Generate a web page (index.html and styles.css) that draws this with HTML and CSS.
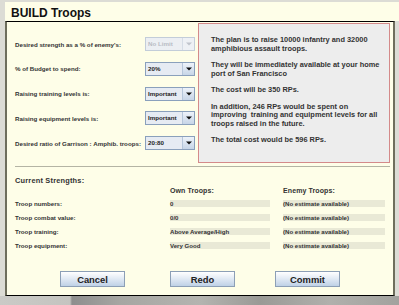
FILE: index.html
```html
<!DOCTYPE html>
<html>
<head>
<meta charset="utf-8">
<link rel="stylesheet" href="styles.css">
</head>
<body>
<div class="screen">
  <div class="window">
    <div class="titlebar"><h1 class="title">BUILD Troops</h1></div>
    <div class="body">
      <div class="top">
        <div class="form">
          <div class="row">
            <span class="label">Desired strength as a % of enemy's:</span>
            <div class="select disabled"><span class="value">No Limit</span><span class="arrow"><svg width="6" height="4" viewBox="0 0 6 4"><path d="M0 0.5H6L3 3.5Z"/></svg></span></div>
          </div>
          <div class="row">
            <span class="label">% of Budget to spend:</span>
            <div class="select"><span class="value">20%</span><span class="arrow"><svg width="6" height="4" viewBox="0 0 6 4"><path d="M0 0.5H6L3 3.5Z"/></svg></span></div>
          </div>
          <div class="row">
            <span class="label">Raising training levels is:</span>
            <div class="select"><span class="value">Important</span><span class="arrow"><svg width="6" height="4" viewBox="0 0 6 4"><path d="M0 0.5H6L3 3.5Z"/></svg></span></div>
          </div>
          <div class="row">
            <span class="label">Raising equipment levels is:</span>
            <div class="select"><span class="value">Important</span><span class="arrow"><svg width="6" height="4" viewBox="0 0 6 4"><path d="M0 0.5H6L3 3.5Z"/></svg></span></div>
          </div>
          <div class="row">
            <span class="label">Desired ratio of Garrison : Amphib. troops:</span>
            <div class="select"><span class="value">20:80</span><span class="arrow"><svg width="6" height="4" viewBox="0 0 6 4"><path d="M0 0.5H6L3 3.5Z"/></svg></span></div>
          </div>
        </div>
        <div class="info">
          <p>The plan is to raise 10000 infantry and 32000<br>amphibious assault troops.</p>
          <p>They will be immediately available at your home<br>port of San Francisco</p>
          <p>The cost will be 350 RPs.</p>
          <p>In addition, 246 RPs would be spent on<br>improving &nbsp;training and equipment levels for all<br>troops raised in the future.</p>
          <p>The total cost would be 596 RPs.</p>
        </div>
      </div>
      <div class="sep"></div>
      <div class="strengths">
        <div class="heading">Current Strengths:</div>
        <div class="grid">
          <span></span><span class="colhead">Own Troops:</span><span class="colhead">Enemy Troops:</span>
          <span class="label">Troop numbers:</span><span class="bar">0</span><span class="bar">(No estimate available)</span>
          <span class="label">Troop combat value:</span><span class="bar">0/0</span><span class="bar">(No estimate available)</span>
          <span class="label">Troop training:</span><span class="bar">Above Average/High</span><span class="bar">(No estimate available)</span>
          <span class="label">Troop equipment:</span><span class="bar">Very Good</span><span class="bar">(No estimate available)</span>
        </div>
      </div>
      <div class="buttons">
        <button class="btn btn-cancel">Cancel</button>
        <button class="btn btn-redo">Redo</button>
        <button class="btn btn-commit">Commit</button>
      </div>
    </div>
  </div>
  <div class="ground"></div>
</div>
</body>
</html>
```
FILE: styles.css
```css
html, body {
  margin: 0;
  padding: 0;
}
body {
  font-family: "Liberation Sans", Arial, sans-serif;
  color: #222;
}
.screen {
  width: 399px;
  height: 305px;
  background: #dcdcd5;
  display: flex;
  flex-direction: column;
  overflow: hidden;
}
.window {
  margin: 2px 0 0 5px;
  height: 294px;
  display: flex;
  flex-direction: column;
}
.titlebar {
  height: 19px;
  background: #fefee8;
  display: flex;
  align-items: center;
  padding-left: 6px;
}
.title {
  margin: 0;
  font-size: 12px;
  font-weight: bold;
  color: #111;
  padding-top: 2px;
}
.body {
  flex: 1;
  margin-right: 4px;
  background: #fefee8;
  border-top: 1px solid #000;
  border-bottom: 1px solid #000;
  border-left: 2px solid #6e6e5c;
  border-right: 2px solid #6e6e5c;
  display: flex;
  flex-direction: column;
}
.top {
  display: flex;
}
.form {
  width: 183px;
  padding: 15px 0 0 8px;
  display: flex;
  flex-direction: column;
  gap: 10.75px;
}
.row {
  display: flex;
  align-items: center;
  height: 14px;
}
.label {
  font-size: 6.2px;
  font-weight: bold;
  color: #333;
  white-space: nowrap;
}
.row .label {
  width: 130px;
}
.select {
  width: 50px;
  height: 14px;
  box-sizing: border-box;
  border: 1px solid #8aa0bc;
  background: #e6ebf3;
  display: flex;
}
.select .value {
  flex: 1;
  font-size: 6.2px;
  font-weight: bold;
  color: #222;
  padding: 2px 0 0 2px;
  line-height: 7px;
}
.select .arrow {
  width: 11px;
  border-left: 1px solid #b6c6da;
  background: linear-gradient(#eef3fa, #c7d5e7);
  display: flex;
  align-items: center;
  justify-content: center;
}
.select .arrow svg {
  fill: #111;
}
.select.disabled {
  border-color: #c3cdd9;
  background: #eceff3;
}
.select.disabled .value {
  color: #b8bcc4;
}
.select.disabled .arrow {
  background: #eef1f5;
  border-left-color: #d6dde6;
}
.select.disabled .arrow svg {
  fill: #c0c4cc;
}
.info {
  flex: 1;
  margin: 1px 3px 0 0;
  height: 140px;
  box-sizing: border-box;
  border: 1px solid #d48a8a;
  background: #ededed;
  padding: 12px 0 0 12px;
  font-size: 7.4px;
  font-weight: bold;
  color: #333;
  line-height: 8.5px;
  white-space: nowrap;
}
.info p {
  margin: 0 0 8px 0;
}
.sep {
  height: 1px;
  background: #b4b4a4;
  margin: 3px 3px 0 8px;
}
.strengths {
  padding: 9px 0 0 8px;
}
.heading {
  font-size: 7.4px;
  font-weight: bold;
  color: #333;
  line-height: 9px;
  letter-spacing: 0.2px;
}
.grid {
  display: grid;
  grid-template-columns: 142px 100px 102px;
  column-gap: 13px;
  grid-auto-rows: 14px;
  align-items: center;
  margin-top: -3px;
}
.colhead {
  font-size: 7px;
  font-weight: bold;
  color: #333;
  padding-top: 3px;
  letter-spacing: 0.1px;
}
.bar {
  height: 7px;
  background: #e9e9d6;
  font-size: 6.1px;
  font-weight: bold;
  color: #333;
  line-height: 7px;
  white-space: nowrap;
}
.buttons {
  margin-top: auto;
  margin-bottom: 8px;
  display: flex;
  padding-left: 53px;
}
.btn {
  width: 65px;
  height: 16px;
  box-sizing: border-box;
  border: 1px solid #8c9fb6;
  background: linear-gradient(#ffffff, #e3ebf5 45%, #bfd1e6);
  font-family: "Liberation Sans", Arial, sans-serif;
  font-size: 9.4px;
  font-weight: bold;
  color: #222;
  padding: 0;
  margin: 0;
}
.btn-redo {
  margin-left: 45px;
}
.btn-commit {
  margin-left: 40px;
}
.ground {
  flex: 1;
  background: linear-gradient(90deg, #cacac6 0, #c4c4c0 70px, #8e8e8e 72px, #a6a6a2 120px, #b4b4b0 200px, #9a9a96 260px, #b0b0ac 330px, #a2a29e 399px);
}
```
